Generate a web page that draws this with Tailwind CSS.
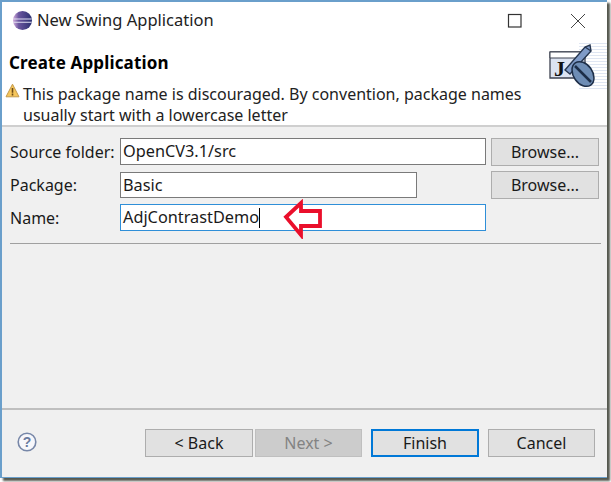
<!DOCTYPE html>
<html><head><meta charset="utf-8"><script src="https://cdn.jsdelivr.net/npm/@tailwindcss/browser@4"></script></head>
<body class="m-0 bg-white">
<div class="w-[611px] h-[482px] bg-white overflow-hidden font-['Noto_Sans',sans-serif] text-[#1a1a1a] text-[16px]">
 <div class="w-[607px] h-[478px] flex flex-col border-l-2 border-t-2 border-b border-[#6a9fcb] shadow-[3px_3px_2px_#55584f]">
  <div class="h-[37px] bg-white flex items-center shrink-0 pl-[35px] relative">
   <svg class="absolute left-[10px] top-[8px]" width="21" height="21" viewBox="0 0 21 21"><defs><linearGradient id="e" x1="0" x2="1" y1="0" y2="0"><stop offset="0" stop-color="#d3aedd"/><stop offset=".3" stop-color="#6a569f"/><stop offset="1" stop-color="#2a3070"/></linearGradient></defs><circle cx="10.5" cy="10.5" r="9.5" fill="url(#e)"/><path d="M1.5 9h18M1.5 12.2h18" stroke="#dfe0f2" stroke-width="1.1"/></svg>
   <span class="leading-none text-[#222] text-[16.5px]">New Swing Application</span>
   <svg class="absolute left-[505px] top-[11px]" width="16" height="16" viewBox="0 0 16 16"><rect x="1.5" y="1.5" width="12.5" height="12.5" fill="none" stroke="#333" stroke-width="1.2"/></svg>
   <svg class="absolute left-[568px] top-[11px]" width="16" height="16" viewBox="0 0 16 16"><path d="M1 1l14 14M15 1L1 15" stroke="#444" stroke-width="1"/></svg>
  </div>
  <div class="h-[86px] shrink-0 bg-white relative pl-[7px] pt-[13px]">
   <div class="absolute right-0 top-[4px] w-[28px] h-[48px] bg-[repeating-linear-gradient(180deg,#dfe6f2_0,#dfe6f2_1px,#ffffff_1px,#ffffff_3px)]"></div>
   <svg class="absolute left-[546px] top-[5px]" width="50" height="48" viewBox="0 0 50 48">
    <path d="M2 8h35v26H2z" fill="#dce3f1" stroke="#3d4250" stroke-width="1.3"/><path d="M2 8h35v6H2z" fill="#fff" stroke="#3d4250" stroke-width="1"/>
    <text x="6" y="32" font-family="Liberation Serif" font-weight="700" font-size="22" fill="#111">J</text>
    <path d="M17 26L37 3l5-2 1 6-21 23z" fill="#7f9bc8" stroke="#26364f" stroke-width="1.4"/><path d="M37 3l6 4" stroke="#26364f" stroke-width="1.4"/>
    <ellipse cx="35" cy="30" rx="9.5" ry="13.5" transform="rotate(-35 35 30)" fill="#6e8db5" stroke="#1d2e48" stroke-width="1.5"/><path d="M27 22l16 16" stroke="#1d2e48" stroke-width="2.5"/>
   </svg>
   <div class="relative font-bold text-[17px] tracking-[0.15px] leading-[22px] text-black">Create Application</div>
   <div class="relative flex mt-[10px]">
    <svg class="mt-[-1px] w-[15px] h-[15px] shrink-0 -ml-[4px]" viewBox="0 0 15 15"><path d="M7.5 1.2L14 13.8H1z" fill="#f6c65b" stroke="#c39a4c" stroke-width="1" stroke-linejoin="round"/><path d="M7.5 5v4.8M7.5 10.6v1.8" stroke="#6b4a16" stroke-width="1.6"/></svg>
    <div class="ml-[3px] text-[16px] leading-[20.5px] text-[#222] whitespace-nowrap">This package name is discouraged. By convention, package names<br>usually start with a lowercase letter</div>
   </div>
  </div>
  <div class="flex-1 bg-[#f0f0f0] border-t-2 border-[#cfcfcf] flex flex-col">
   <div class="pl-[8px] pr-[6px] pt-[11px]">
    <div class="flex items-center h-[27px]">
     <span class="w-[110px] whitespace-nowrap">Source folder:</span>
     <div class="w-[366px] h-[27px] bg-white border border-[#7a7a7a] text-[16.3px] leading-[25px] pl-[2px]">OpenCV3.1/src</div>
     <div class="ml-[5px] w-[108px] h-[28px] bg-[#e1e1e1] border border-[#adadad] flex items-center justify-center">Browse...</div>
    </div>
    <div class="flex items-center h-[26px] mt-[7px]">
     <span class="w-[110px]">Package:</span>
     <div class="w-[297px] h-[26px] bg-white border border-[#7a7a7a] text-[16.3px] leading-[24px] pl-[2px]">Basic</div>
     <div class="ml-[74px] w-[108px] h-[28px] bg-[#e1e1e1] border border-[#adadad] flex items-center justify-center">Browse...</div>
    </div>
    <div class="flex items-center h-[27px] mt-[6px] relative">
     <span class="w-[110px]">Name:</span>
     <div class="w-[366px] h-[27px] bg-white border border-[#2f8fd8] text-[16.3px] leading-[25px] pl-[2px] flex"><span>AdjContrastDemo</span><span class="w-px h-[20px] mt-[3px] bg-black"></span></div>
     <svg class="absolute left-[271px] top-[-5px]" width="44" height="40" viewBox="0 0 44 40"><path d="M5 18L20 4v8h19v15H20v9z" fill="none" stroke="#ea0f2b" stroke-width="3.8" stroke-linejoin="miter"/></svg>
    </div>
    <div class="h-px bg-[#a0a0a0] mt-[12px]"></div>
   </div>
   <div class="flex-1"></div>
   <div class="h-[69px] border-t-2 border-[#bfbfbf] shrink-0 flex items-start pt-[19px] pl-[15px] relative">
    <svg width="20" height="20" viewBox="0 0 20 20" class="mt-[3px] shrink-0"><circle cx="10" cy="10" r="8.8" fill="#f7f7fb" stroke="#7787a8" stroke-width="1.6"/><text x="10" y="15" text-anchor="middle" font-family="Liberation Sans" font-weight="700" font-size="14" fill="#6a7b9f">?</text></svg>
    <div class="ml-[108px] w-[108px] h-[28px] bg-[#e1e1e1] border border-[#adadad] flex items-center justify-center">&lt; Back</div>
    <div class="ml-[2px] w-[107px] h-[28px] bg-[#cccccc] border border-[#bfbfbf] text-[#838383] flex items-center justify-center">Next &gt;</div>
    <div class="ml-[9px] w-[108px] h-[28px] bg-[#e1e1e1] border-2 border-[#0078d7] flex items-center justify-center">Finish</div>
    <div class="ml-[9px] w-[107px] h-[28px] bg-[#e1e1e1] border border-[#adadad] flex items-center justify-center">Cancel</div>
   </div>
  </div>
 </div>
</div>
</body></html>
